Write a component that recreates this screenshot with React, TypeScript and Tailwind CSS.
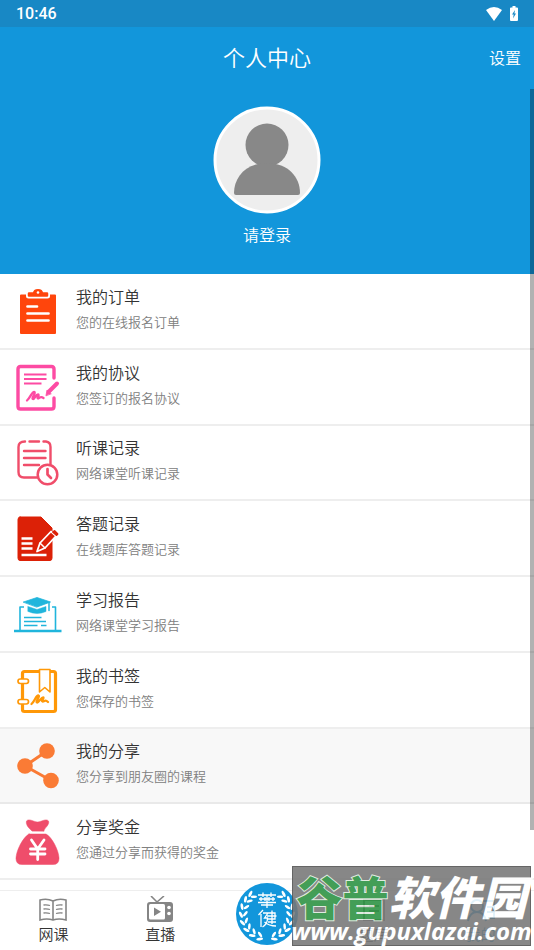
import React from "react";

type IconProps = { children: React.ReactNode; color: string };

function Icon({ children, color }: IconProps) {
  return (
    <svg viewBox="0 0 48 48" className="mt-0.5 size-12 shrink-0" fill="none" stroke={color} strokeLinecap="round" strokeLinejoin="round" aria-hidden="true">
      {children}
    </svg>
  );
}

const OrderIcon = () => (
  <Icon color="#ff450c">
    <path d="M7 7.500H12V9.500H36V7.500H41V45H7Z" fill="#ff450c" strokeWidth="2" />
    <path d="M14.500 8V5H19.500C20 1.500 28 1.500 28.500 5H33.500V8Z" fill="#ff450c" stroke="#fff" strokeWidth="5" />
    <path d="M15 7.500V5.500H20C20.500 1 27.500 1 28 5.500H33V7.500Z" fill="#ff450c" strokeWidth="2.500" />
    <circle cx="24" cy="4.500" r="1.300" fill="#fff" stroke="none" />
    <path d="M13.500 18.500H23M13.500 25.500H34.500M13.500 32.500H34.500" stroke="#fff" strokeWidth="2.700" />
  </Icon>
);

const AgreementIcon = () => (
  <Icon color="#fd4ba3">
    <path d="M40 14V5Q40 2.500 37.500 2.500H6.500Q4 2.500 4 5V42.500Q4 45 6.500 45H37.500Q40 45 40 42.500V34" strokeWidth="3.400" />
    <path d="M10 10.500H32.500M10 15H32.500M10 19.500H27.500" strokeWidth="2.200" strokeLinecap="butt" />
    <path d="M13 36.500C17 33 18 27 20.500 28C22 29.500 17 34.500 19 35C21 35 22 29.500 24.500 30.500C25.500 31.500 22.500 34 24 34.500C26 34.500 26 31.500 29.500 34" strokeWidth="2.300" />
    <path d="M35.500 27L43 19.500" strokeWidth="4" />
    <path d="M32 31.500L33 26L37 29.500Z" fill="#fd4ba3" strokeWidth="0.800" />
  </Icon>
);

const LectureIcon = () => (
  <Icon color="#f04d6a">
    <path d="M11 2.500C7 2.500 4.500 4 4.500 8V33Q4.500 38.500 10 38.500H23" strokeWidth="2.400" />
    <path d="M15.500 2.500H25M29.500 2.500H32Q36.500 3 36.500 8V25" strokeWidth="2.400" />
    <path d="M10 12H31.500M10 19H31.500M10 26H25" strokeWidth="2.400" />
    <circle cx="33.500" cy="35.500" r="9.800" strokeWidth="2.500" fill="#fff" />
    <path d="M33.500 30V35.500L37 39" strokeWidth="2.700" />
  </Icon>
);

const AnswerIcon = () => (
  <Icon color="#dc2107">
    <path d="M6 2H27L38 13V43Q38 45.500 36 45.500H6Q4 45.500 4 43V4.500Q4 2 6 2Z" fill="#dc2107" strokeWidth="1" />
    <path d="M7.500 23.500H18.500M7.500 28.500H18.500M7.500 33.500H18.500M7.500 40H32.500" stroke="#fff" strokeWidth="2.700" strokeLinecap="butt" />
    <path d="M23 36.500L26 28L37 16.500L42 21L31 33Z" fill="#dc2107" stroke="#fff" strokeWidth="1.800" />
    <path d="M26 28L31 33" stroke="#fff" strokeWidth="1.500" />
    <path d="M39 17L40.500 16L43.500 19L42.500 20Z" fill="#dc2107" strokeWidth="1.800" />
  </Icon>
);

const ReportIcon = () => (
  <Icon color="#20b5dc">
    <path d="M0 40H47.500" strokeWidth="2.400" strokeLinecap="butt" />
    <path d="M10 16H6V39M38 16H41.500V39" strokeWidth="1.600" strokeLinecap="butt" />
    <path d="M10 26.500H27.500M10 30.500H32M10 34.500H23.500M27 34.500H32.500" strokeWidth="1.300" strokeLinecap="butt" />
    <path d="M9.500 11L23 6.500L36.500 11L23 16Z" fill="#20b5dc" strokeWidth="0.800" />
    <path d="M14 15.500L23 18.500L32 15.500V20.500Q23 24.500 14 20.500Z" fill="#20b5dc" strokeWidth="0.500" />
    <path d="M35 11.500V19.500" strokeWidth="1.500" />
  </Icon>
);

const BookmarkIcon = () => (
  <Icon color="#ff9807">
    <rect x="8.500" y="4.500" width="33" height="40" rx="2" strokeWidth="3.200" />
    <path d="M25.500 2.500H36V25L30.800 20.500L25.500 25Z" fill="#fff" strokeWidth="1.600" />
    <rect x="4" y="12" width="10.500" height="4.500" rx="2.200" fill="#fff" strokeWidth="1.700" />
    <rect x="4" y="32.500" width="10.500" height="4.500" rx="2.200" fill="#fff" strokeWidth="1.700" />
    <path d="M17.500 37C21 34 22 28 24.500 28.500C26.500 29 21 35 23 35.500C25.500 35 27.500 29.500 29.500 30.500C30 31.500 27 34 28.500 34.500C31 34.500 31 32 34 35" strokeWidth="2.300" />
  </Icon>
);

const ShareIcon = () => (
  <Icon color="#fa7b35">
    <path d="M33 9L11 24L37 38.500" strokeWidth="3" />
    <g fill="#fa7b35" stroke="none">
      <circle cx="33" cy="9" r="7.800" />
      <circle cx="11" cy="24" r="7.800" />
      <circle cx="37" cy="38.500" r="7.800" />
    </g>
  </Icon>
);

const BonusIcon = () => (
  <Icon color="#ef4d6b">
    <path d="M18 13Q11 7 12.500 3C15 0 20 4 23.500 4C27 4 32 0 34.500 3C36 7 30 10 30 13Z" fill="#ef4d6b" strokeWidth="0.500" />
    <path d="M15 16H32C38 19 45 33 45 40.500Q45 46.500 39 46.500H8Q2 46.500 2 40.500C2 33 9 19 15 16Z" fill="#ef4d6b" strokeWidth="0.500" />
    <path d="M17.500 22L23.700 31L30 22M23.700 31V41.500M16.500 31H31M16.500 36H31" stroke="#fff" strokeWidth="2.800" />
  </Icon>
);

const rows = [
  { title: "我的订单", note: "您的在线报名订单", Glyph: OrderIcon },
  { title: "我的协议", note: "您签订的报名协议", Glyph: AgreementIcon },
  { title: "听课记录", note: "网络课堂听课记录", Glyph: LectureIcon },
  { title: "答题记录", note: "在线题库答题记录", Glyph: AnswerIcon },
  { title: "学习报告", note: "网络课堂学习报告", Glyph: ReportIcon },
  { title: "我的书签", note: "您保存的书签", Glyph: BookmarkIcon },
  { title: "我的分享", note: "您分享到朋友圈的课程", Glyph: ShareIcon, active: true },
  { title: "分享奖金", note: "您通过分享而获得的奖金", Glyph: BonusIcon },
];

function StatusBar() {
  return (
    <div className="flex h-[27px] items-center justify-between bg-[#1888c5] px-4 text-white">
      <span className="font-[Roboto] text-base font-medium">10:46</span>
      <div className="flex items-center gap-2">
        <svg viewBox="0 0 16 14" className="h-3.5 w-4" fill="currentColor" aria-hidden="true">
          <path d="M0 3Q8 -3 16 3L8 14Z" />
        </svg>
        <svg viewBox="0 0 8 15" className="h-[15px] w-2" aria-hidden="true">
          <path d="M2.500 0H5.500V1.500H7Q8 1.500 8 2.500V14Q8 15 7 15H1Q0 15 0 14V2.500Q0 1.500 1 1.500H2.500Z" fill="#fff" />
          <path d="M5 4L2 8.500H3.700L3 12.500L6 7.500H4.400Z" fill="#1888c5" />
        </svg>
      </div>
    </div>
  );
}

const leafAngles = [12, 30, 48, 66, 84, 102, 120, 136];

function Leaves() {
  return (
    <g fill="#fff">
      {["left", "right"].map((side) => (
        <g key={side} transform={side === "left" ? undefined : "translate(62 0) scale(-1 1)"}>
          {leafAngles.map((a) => (
            <g key={a} transform={`rotate(${a} 31 31)`}>
              <ellipse cx="29" cy="57" rx="3.400" ry="1.400" transform="rotate(-20 29 57)" />
              <ellipse cx="28.500" cy="52.500" rx="3.200" ry="1.300" transform="rotate(45 28.500 52.500)" />
            </g>
          ))}
        </g>
      ))}
    </g>
  );
}

function Emblem() {
  return (
    <svg viewBox="0 0 62 62" className="size-[62px]" aria-hidden="true">
      <circle cx="31" cy="31" r="31" fill="#1296db" />
      <Leaves />
      <g fill="none" stroke="#fff" strokeWidth="1.300">
        <path d="M22 12H40M27 9.500V14M35 9.500V14M23 16H39M25 14V18M29 14V18M33 14V18M37 14V18M22 19.500H40M31 12V25M25 22H37" />
        <path d="M27 27L22.500 32M25 31V44M27 30H32L28.500 35H31.500Q31.500 41 26.500 44M28.500 39Q33 43 40 43M32 30H39V36H32M31 33H40.500M36 27.500V41M32 39H40" />
      </g>
    </svg>
  );
}

const tab = "flex flex-1 flex-col items-center gap-0.5 pt-[5px] text-[15px] leading-5 text-[#333]";

function TabBar() {
  return (
    <nav className="flex h-[60px] shrink-0 border-t border-[#eee] bg-white">
      <button type="button" className={tab}>
        <svg viewBox="0 0 28 26" className="h-[26px] w-7" fill="none" stroke="#858585" strokeWidth="1.600" aria-hidden="true">
          <path d="M14 5Q8 2 1 4V24Q8 22 14 24Q20 22 27 24V4Q20 2 14 5V24" />
          <path d="M4.500 9Q8 8.500 11 9.500M4.500 13Q8 12.500 11 13.500M4.500 17Q8 16.500 11 17.500M17 9.500Q20 8.500 23.500 9M17 13.500Q20 12.500 23.500 13M17 17.500Q20 16.500 23.500 17" strokeWidth="1.300" />
        </svg>
        网课
      </button>
      <button type="button" className={tab}>
        <svg viewBox="0 0 28 26" className="h-[26px] w-7" aria-hidden="true">
          <path d="M5 0L11 6L18 0" fill="none" stroke="#858585" strokeWidth="1.600" />
          <rect x="1" y="6" width="26" height="20" rx="3" fill="#858585" />
          <rect x="3" y="8" width="16" height="15.500" rx="1.500" fill="#fff" />
          <path d="M8 11.500V20L15 15.700Z" fill="#858585" />
          <circle cx="23" cy="11.500" r="1.800" fill="#fff" />
          <circle cx="23" cy="17.500" r="1.800" fill="#fff" />
        </svg>
        直播
      </button>
      <button type="button" aria-label="首页" className="-mt-2 flex flex-1 justify-center">
        <Emblem />
      </button>
      <button type="button" className={tab}>
        <svg viewBox="0 0 28 26" className="h-[26px] w-7" fill="none" stroke="#858585" strokeWidth="2" aria-hidden="true">
          <path d="M4 4H24V24H4ZM9 10H19M9 15H19" />
        </svg>
        题库
      </button>
      <button type="button" className="flex flex-1 flex-col items-center gap-0.5 pt-[5px] text-[15px] leading-5 text-[#1296db]">
        <svg viewBox="0 0 28 26" className="h-[26px] w-7" fill="none" stroke="#1296db" strokeWidth="2" aria-hidden="true">
          <circle cx="10" cy="10" r="6" />
          <path d="M1 25Q3 16 10 16Q17 16 19 25M16 5H27V22H21M20 11H27M20 16H27" />
        </svg>
        我的
      </button>
    </nav>
  );
}

function Watermark() {
  return (
    <div className="absolute right-[3px] bottom-1 flex h-20 w-[239px] flex-col items-center border border-[#505050] bg-[#777] font-bold whitespace-nowrap text-white opacity-88">
      <div className="text-[46px] leading-[56px] font-black">
        <span className="text-[#2a9140] [paint-order:stroke_fill] [-webkit-text-stroke:2px_#dce9dd]">谷普</span>
        <span className="italic">软件园</span>
      </div>
      <div className="-mt-2 font-['Open_Sans'] text-[24px] leading-8 italic">www.gupuxlazai.com</div>
    </div>
  );
}

export default function App() {
  return (
    <div className="relative flex min-h-screen flex-col bg-white font-['Noto_Sans_CJK_SC',sans-serif] font-[350]">
      <header className="shrink-0 bg-[#1296db] text-white">
        <StatusBar />
        <div className="grid h-[62px] grid-cols-[1fr_auto_1fr] items-center px-[13px] pb-0.5">
          <h1 className="col-start-2 pb-0.5 text-[22px] font-[350]">个人中心</h1>
          <button type="button" className="justify-self-end text-base">设置</button>
        </div>
        <div className="flex flex-col items-center pt-[17px] pb-7">
          <svg viewBox="0 0 108 108" className="size-[108px]" aria-hidden="true">
            <circle cx="54" cy="54" r="52" fill="#eee" stroke="#fff" strokeWidth="3" />
            <circle cx="54" cy="39" r="21.500" fill="#888" />
            <path d="M21 87C21 71 33 57 54 57S87 71 87 87Q87 89 85 89H23Q21 89 21 87Z" fill="#888" />
          </svg>
          <button type="button" className="mt-2 text-base">请登录</button>
        </div>
      </header>
      <ul className="mb-2.5 grid flex-1 auto-rows-fr">
        {rows.map(({ title, note, Glyph, active }) => (
          <li key={title} className={active ? "border-b-2 border-[#e9e9e9] bg-[#f8f8f8]" : "border-b-2 border-[#eee] bg-white"}>
            <a href="#" className="flex h-full items-center gap-[14px] pl-[14px]">
              <Glyph />
              <span className="flex flex-col gap-1 pb-1.5">
                <span className="text-base leading-6 text-[#333]">{title}</span>
                <span className="text-[13px] leading-5 text-[#808080]">{note}</span>
              </span>
            </a>
          </li>
        ))}
      </ul>
      <TabBar />
      <div className="absolute top-[89px] right-0 h-[741px] w-1 bg-black/30" />
      <Watermark />
    </div>
  );
}
